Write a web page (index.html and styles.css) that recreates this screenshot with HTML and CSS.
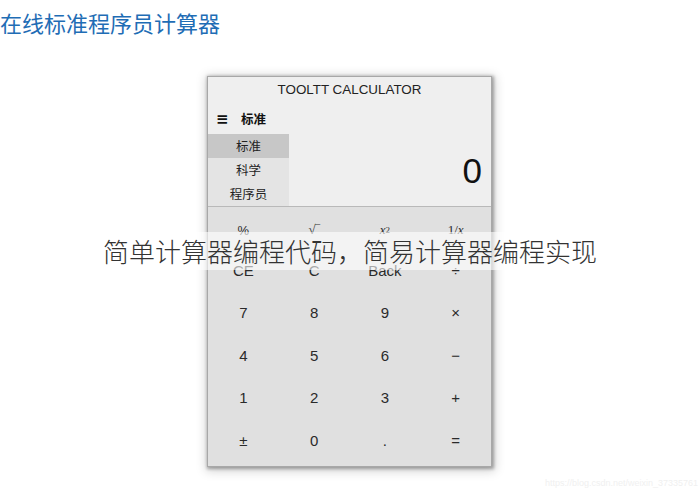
FILE: index.html
```html
<!DOCTYPE html>
<html lang="zh">
<head>
<meta charset="utf-8">
<title>在线标准程序员计算器</title>
<link rel="stylesheet" href="styles.css">
</head>
<body>
<h1 class="page-title">在线标准程序员计算器</h1>
<div class="calc">
  <div class="calc-top">
    <div class="calc-title">TOOLTT CALCULATOR</div>
    <div class="mode-head"><span class="burger">≡</span><span class="mode-name">标准</span></div>
    <div class="top-body">
      <ul class="menu">
        <li class="menu-item active">标准</li>
        <li class="menu-item">科学</li>
        <li class="menu-item">程序员</li>
      </ul>
      <div class="display">0</div>
    </div>
  </div>
  <div class="keys">
    <div class="key small">%</div>
    <div class="key small serif">√‾</div>
    <div class="key small serif"><i>x</i><sup>2</sup></div>
    <div class="key small serif">1/<i>x</i></div>
    <div class="key">CE</div>
    <div class="key">C</div>
    <div class="key">Back</div>
    <div class="key">÷</div>
    <div class="key">7</div>
    <div class="key">8</div>
    <div class="key">9</div>
    <div class="key">×</div>
    <div class="key">4</div>
    <div class="key">5</div>
    <div class="key">6</div>
    <div class="key">−</div>
    <div class="key">1</div>
    <div class="key">2</div>
    <div class="key">3</div>
    <div class="key">+</div>
    <div class="key">±</div>
    <div class="key">0</div>
    <div class="key">.</div>
    <div class="key">=</div>
  </div>
</div>
<div class="banner">简单计算器编程代码，简易计算器编程实现</div>
<div class="watermark">https://blog.csdn.net/weixin_37335761</div>
</body>
</html>
```
FILE: styles.css
```css
html, body {
  margin: 0;
  padding: 0;
  background: #ffffff;
  width: 700px;
  height: 490px;
  overflow: hidden;
  position: relative;
  font-family: "Liberation Sans", "Noto Sans CJK SC", sans-serif;
}
.page-title {
  margin: 0;
  padding: 8px 0 0 0;
  height: 30px;
  font-size: 22px;
  line-height: 28px;
  font-weight: 400;
  color: #1f6db5;
  font-family: "Noto Sans CJK SC", sans-serif;
}
.calc {
  margin: 39px 0 0 208px;
  width: 283px;
  background: #e0e0e0;
  box-shadow: 0 0 0 1px #a8a8a8, 1px 1px 3px 2px rgba(0,0,0,0.3), 1px 2px 10px 3px rgba(0,0,0,0.18);
}
.calc-top {
  background: #efefef;
  border-bottom: 1px solid #b9b9b9;
}
.calc-title {
  height: 26px;
  line-height: 26px;
  text-align: center;
  font-size: 13.4px;
  color: #222;
}
.mode-head {
  height: 31px;
  display: flex;
  align-items: center;
  padding-left: 8px;
  font-size: 12.5px;
  font-weight: 700;
  color: #111;
  font-family: "Noto Sans CJK SC", sans-serif;
}
.burger {
  font-size: 15px;
  width: 20px;
  font-family: "DejaVu Sans", sans-serif;
  font-weight: 700;
}
.mode-name {
  margin-left: 5px;
}
.top-body {
  display: flex;
  justify-content: space-between;
}
.menu {
  list-style: none;
  margin: 0;
  padding: 0;
  width: 81px;
}
.menu-item {
  height: 24px;
  line-height: 24px;
  text-align: center;
  font-size: 12.5px;
  color: #222;
  background: #e4e4e4;
  font-family: "Noto Sans CJK SC", sans-serif;
}
.menu-item.active {
  background: #c7c7c7;
}
.display {
  align-self: center;
  font-size: 35px;
  color: #111;
  padding-right: 9px;
  line-height: 36px;
  margin-top: 2px;
}
.keys {
  display: grid;
  grid-template-columns: repeat(4, 1fr);
  grid-auto-rows: 42.4px;
  padding-bottom: 5px;
}
.key {
  display: flex;
  align-items: center;
  justify-content: center;
  font-size: 15px;
  color: #2a2a2a;
}
.key.small {
  font-size: 13px;
  padding-top: 4px;
}
.key.serif {
  font-family: "Liberation Serif", serif;
}
.key sup {
  font-size: 9px;
  vertical-align: 6px;
}
.banner {
  position: absolute;
  left: 0;
  top: 232px;
  width: 700px;
  height: 38px;
  line-height: 38px;
  background: rgba(255,255,255,0.6);
  text-align: center;
  font-size: 26px;
  font-weight: 300;
  color: #333;
  font-family: "Noto Sans CJK SC", sans-serif;
}
.watermark {
  position: absolute;
  right: 2px;
  bottom: 2px;
  font-size: 9px;
  color: #f0f0f0;
}
```
